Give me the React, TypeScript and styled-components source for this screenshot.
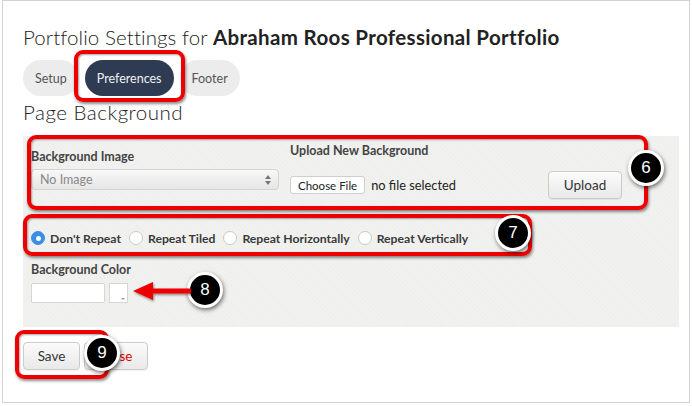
import styled, { createGlobalStyle } from "styled-components";

const GlobalStyle = createGlobalStyle`
  html, body {
    margin: 0;
    padding: 0;
    background: #ffffff;
  }
  body {
    font-family: "Lato", "Open Sans", "Liberation Sans", sans-serif;
    color: #333;
  }
`;

const colors = {
  red: "#ee0000",
  navy: "#2f3b52",
  pill: "#ececec",
  panel: "#f1f1ef",
};

const Frame = styled.div`
  position: relative;
  box-sizing: border-box;
  margin-left: 2px;
  width: 688px;
  height: 403px;
  border: 1px solid #d2d2d2;
  padding: 24px 9px 0 20px;
  display: flex;
  flex-direction: column;
`;

const Title = styled.h1`
  margin: 0;
  font-size: 20.5px;
  line-height: 24px;
  font-weight: 300;
  color: #222;
  letter-spacing: 0.1px;

  strong {
    font-weight: 700;
    letter-spacing: 0.35px;
  }
`;

const Tabs = styled.nav`
  display: flex;
  gap: 6px;
  margin-top: 11px;
`;

const Tab = styled.div<{ $active?: boolean }>`
  height: 36px;
  padding: 0 12px;
  border-radius: 18px;
  display: flex;
  align-items: center;
  font-size: 12.5px;
  background: ${({ $active }) => ($active ? colors.navy : colors.pill)};
  color: ${({ $active }) => ($active ? "#eef0f4" : "#555")};
`;

const SectionTitle = styled.h2`
  margin: 5px 0 0;
  font-size: 20.5px;
  line-height: 22px;
  font-weight: 300;
  color: #222;
  letter-spacing: 0.5px;
`;

const Panel = styled.section`
  margin-top: 13px;
  width: 656px;
  box-sizing: border-box;
  padding: 0 8px 24px;
  background: repeating-linear-gradient(
    45deg,
    ${colors.panel} 0px,
    ${colors.panel} 2px,
    #eeeeec 2px,
    #eeeeec 3px
  );
`;

const ImageRow = styled.div`
  height: 73px;
  display: flex;
  gap: 11px;
`;

const Column = styled.div<{ $top: number; $width: number }>`
  display: flex;
  flex-direction: column;
  padding-top: ${({ $top }) => $top}px;
  width: ${({ $width }) => $width}px;
`;

const Label = styled.label`
  font-size: 12.5px;
  line-height: 14px;
  font-weight: 700;
  color: #444;
`;

const Select = styled.div`
  margin-top: 5px;
  height: 21px;
  box-sizing: border-box;
  border: 1px solid #d3d3d3;
  border-radius: 4px;
  background: linear-gradient(#f8f8f8, #e6e6e6);
  display: flex;
  align-items: center;
  justify-content: space-between;
  padding: 0 7px 0 8px;
  font-size: 12.5px;
  color: #888;
`;

const FileRow = styled.div`
  margin-top: 13px;
  display: flex;
  align-items: center;
`;

const FileButton = styled.div`
  height: 16px;
  padding: 0 7px;
  display: flex;
  align-items: center;
  background: #fff;
  border: 1px solid #cfcfcf;
  border-radius: 3px;
  font-size: 11.5px;
  color: #222;
`;

const FileText = styled.span`
  margin-left: 6px;
  font-size: 12.8px;
  color: #222;
  flex: 1;
`;

const Button = styled.div<{ $width: number; $danger?: boolean }>`
  width: ${({ $width }) => $width}px;
  height: 28px;
  box-sizing: border-box;
  display: flex;
  align-items: center;
  justify-content: center;
  border: 1px solid #cbcbcb;
  border-radius: 4px;
  background: linear-gradient(#fbfbfb, #e9e9e9);
  font-size: 13.5px;
  color: ${({ $danger }) => ($danger ? "#e00000" : "#333")};
  box-shadow: 0 1px 0 rgba(0, 0, 0, 0.05);
`;

const RadioRow = styled.div`
  margin-top: 19px;
  height: 20px;
  display: flex;
  align-items: center;
  gap: 8px;
`;

const RadioOption = styled.div`
  display: flex;
  align-items: center;
  gap: 5px;
  font-size: 12.2px;
  font-weight: 700;
  color: #3a3a3a;
`;

const Radio = styled.span<{ $checked?: boolean }>`
  width: 14px;
  height: 14px;
  box-sizing: border-box;
  border-radius: 50%;
  border: 1px solid ${({ $checked }) => ($checked ? "#3a8ee6" : "#c9c9c9")};
  background: ${({ $checked }) => ($checked ? "#3a8ee6" : "#fff")};
  display: flex;
  align-items: center;
  justify-content: center;

  &::after {
    content: "";
    width: 5px;
    height: 5px;
    border-radius: 50%;
    background: ${({ $checked }) => ($checked ? "#fff" : "transparent")};
  }
`;

const ColorLabel = styled(Label)`
  margin-top: 15px;
  display: block;
`;

const ColorRow = styled.div`
  margin-top: 6px;
  display: flex;
  gap: 4px;
`;

const ColorInput = styled.div`
  width: 74px;
  height: 20px;
  box-sizing: border-box;
  background: #fff;
  border: 1px solid #d6d6d6;
  border-radius: 2px;
`;

const Swatch = styled.div`
  position: relative;
  width: 19px;
  height: 20px;
  box-sizing: border-box;
  background: #fff;
  border: 1px solid #d6d6d6;

  &::after {
    content: "";
    position: absolute;
    right: 2px;
    bottom: 2px;
    border-left: 2px solid transparent;
    border-right: 2px solid transparent;
    border-top: 2px solid #999;
  }
`;

const Actions = styled.div`
  margin-top: 15px;
  display: flex;
  gap: 4px;
`;

/* annotation layer drawn over the screenshot */
const Callout = styled.div<{ $x: number; $y: number; $w: number; $h: number }>`
  position: absolute;
  left: ${({ $x }) => $x}px;
  top: ${({ $y }) => $y}px;
  width: ${({ $w }) => $w}px;
  height: ${({ $h }) => $h}px;
  box-sizing: border-box;
  border: 4px solid ${colors.red};
  border-radius: 9px;
  box-shadow: 1px 2px 3px rgba(0, 0, 0, 0.45),
    inset 1px 1px 2px rgba(0, 0, 0, 0.35);
  pointer-events: none;
`;

const Badge = styled.div<{ $x: number; $y: number }>`
  position: absolute;
  left: ${({ $x }) => $x - 18}px;
  top: ${({ $y }) => $y - 18}px;
  width: 36px;
  height: 36px;
  box-sizing: border-box;
  border-radius: 50%;
  background: #000;
  border: 3px solid #fff;
  box-shadow: 1px 2px 4px rgba(0, 0, 0, 0.55);
  color: #fff;
  font-family: "Liberation Sans", "Helvetica", sans-serif;
  font-size: 17px;
  display: flex;
  align-items: center;
  justify-content: center;
`;

const Arrow = styled.svg`
  position: absolute;
  left: 128px;
  top: 280px;
  overflow: visible;
`;

function SelectArrows() {
  return (
    <svg width="6" height="10" viewBox="0 0 6 10">
      <path d="M3 0 L6 4 L0 4 Z M0 6 L6 6 L3 10 Z" fill="#777" />
    </svg>
  );
}

export default function App() {
  return (
    <>
      <GlobalStyle />
      <Frame>
        <Title>
          Portfolio Settings for <strong>Abraham Roos Professional Portfolio</strong>
        </Title>
        <Tabs>
          <Tab>Setup</Tab>
          <Tab $active>Preferences</Tab>
          <Tab>Footer</Tab>
        </Tabs>
        <SectionTitle>Page Background</SectionTitle>
        <Panel>
          <ImageRow>
            <Column $top={14} $width={248}>
              <Label>Background Image</Label>
              <Select>
                No Image
                <SelectArrows />
              </Select>
            </Column>
            <Column $top={8} $width={332}>
              <Label>Upload New Background</Label>
              <FileRow>
                <FileButton>Choose File</FileButton>
                <FileText>no file selected</FileText>
                <Button $width={74}>Upload</Button>
              </FileRow>
            </Column>
          </ImageRow>
          <RadioRow>
            <RadioOption>
              <Radio $checked />
              Don't Repeat
            </RadioOption>
            <RadioOption>
              <Radio />
              Repeat Tiled
            </RadioOption>
            <RadioOption>
              <Radio />
              Repeat Horizontally
            </RadioOption>
            <RadioOption>
              <Radio />
              Repeat Vertically
            </RadioOption>
          </RadioRow>
          <ColorLabel>Background Color</ColorLabel>
          <ColorRow>
            <ColorInput />
            <Swatch />
          </ColorRow>
        </Panel>
        <Actions>
          <Button $width={57}>Save</Button>
          <Button $width={64} $danger>
            Close
          </Button>
        </Actions>

        <Callout $x={71} $y={49} $w={111} $h={52} />
        <Callout $x={24} $y={134} $w={621} $h={75} />
        <Callout $x={20} $y={213} $w={509} $h={42} />
        <Callout $x={12} $y={329} $w={94} $h={49} />
        <Badge $x={643} $y={167}>6</Badge>
        <Badge $x={510} $y={232}>7</Badge>
        <Badge $x={202} $y={289}>8</Badge>
        <Badge $x={99} $y={352}>9</Badge>
        <Arrow width="60" height="20" viewBox="0 0 60 20">
          <defs>
            <filter id="arrowShadow" x="-10%" y="-30%" width="130%" height="180%">
              <feDropShadow dx="1" dy="1.5" stdDeviation="1" floodOpacity="0.45" />
            </filter>
          </defs>
          <path
            d="M2 10 L22 1 L22 7.5 L60 7.5 L60 12.5 L22 12.5 L22 19 Z"
            fill="#ee0000"
            filter="url(#arrowShadow)"
          />
        </Arrow>
      </Frame>
    </>
  );
}
